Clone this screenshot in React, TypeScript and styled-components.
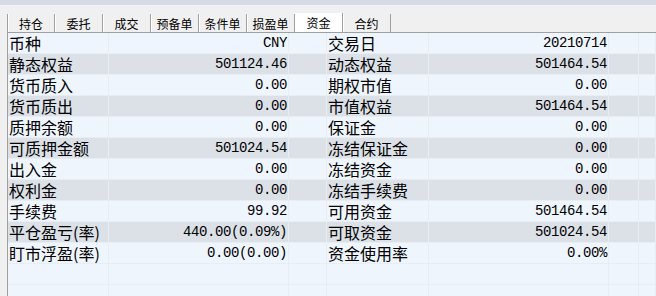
import React from "react";
import styled, { createGlobalStyle } from "styled-components";

const GlobalStyle = createGlobalStyle`
  html, body { margin: 0; padding: 0; background: #f0f0f0; }
  body { font-family: "Noto Sans CJK SC", "Liberation Sans", sans-serif; }
`;

const tabs = ["持仓", "委托", "成交", "预备单", "条件单", "损盈单", "资金", "合约"];
const activeTab = "资金";

const rows: [string, string, string, string][] = [
  ["币种", "CNY", "交易日", "20210714"],
  ["静态权益", "501124.46", "动态权益", "501464.54"],
  ["货币质入", "0.00", "期权市值", "0.00"],
  ["货币质出", "0.00", "市值权益", "501464.54"],
  ["质押余额", "0.00", "保证金", "0.00"],
  ["可质押金额", "501024.54", "冻结保证金", "0.00"],
  ["出入金", "0.00", "冻结资金", "0.00"],
  ["权利金", "0.00", "冻结手续费", "0.00"],
  ["手续费", "99.92", "可用资金", "501464.54"],
  ["平仓盈亏(率)", "440.00(0.09%)", "可取资金", "501024.54"],
  ["盯市浮盈(率)", "0.00(0.00)", "资金使用率", "0.00%"],
];

const COLS = "101px 180px 38px 102px 180px 30px 1fr";

const Screen = styled.div`
  width: 656px;
  height: 296px;
  overflow: hidden;
  background: #f0f0f0;
  display: flex;
  flex-direction: column;
`;

const TopBand = styled.div`
  height: 5px;
  background: #d7dbe8;
  flex: none;
`;

const TabBar = styled.div`
  height: 27px;
  flex: none;
  display: flex;
  align-items: flex-end;
  padding-left: 7px;
`;

const Tab = styled.div<{ $active?: boolean; $first?: boolean }>`
  box-sizing: border-box;
  width: 48px;
  height: ${(p) => (p.$active ? 19 : 18)}px;
  display: flex;
  align-items: center;
  justify-content: center;
  padding-top: ${(p) => (p.$active ? 1 : 2)}px;
  font-size: 12px;
  line-height: 14px;
  color: #000;
  background: ${(p) => (p.$active ? "#ffffff" : "transparent")};
  border-left: ${(p) => (p.$first ? "1px solid #a0a0a0" : "none")};
  border-right: 1px solid #a0a0a0;
  box-shadow: ${(p) => (p.$active ? "none" : "inset 1px 0 0 #ffffff")};
`;

const Panel = styled.div`
  flex: 1;
  margin-left: 7px;
  border-left: 1px solid #a0a0a0;
  border-top: 1px solid #a0a0a0;
  background: #eff5fd;
`;

const Row = styled.div<{ $shade?: boolean }>`
  display: grid;
  grid-template-columns: ${COLS};
  height: 21px;
  box-sizing: border-box;
  border-bottom: 1px solid #e8edf4;
  background: ${(p) => (p.$shade ? "#dce1e8" : "#eff5fd")};
`;

const Cell = styled.div<{ $num?: boolean }>`
  box-sizing: border-box;
  border-right: 1px solid #e8edf4;
  height: 20px;
  line-height: 20px;
  white-space: nowrap;
  color: #000;
  ${(p) =>
    p.$num
      ? `font-family: "Liberation Mono", monospace; font-size: 14px; letter-spacing: -0.4px; text-align: right; padding-right: 1px;`
      : `font-size: 16px; padding-left: 1px;`}
`;

export default function App() {
  return (
    <Screen>
      <GlobalStyle />
      <TopBand />
      <TabBar>
        {tabs.map((t, i) => (
          <Tab key={t} $first={i === 0} $active={t === activeTab}>
            {t}
          </Tab>
        ))}
      </TabBar>
      <Panel>
        {rows.map((r, i) => (
          <Row key={r[0]} $shade={i % 2 === 1}>
            <Cell>{r[0]}</Cell>
            <Cell $num>{r[1]}</Cell>
            <Cell />
            <Cell>{r[2]}</Cell>
            <Cell $num>{r[3]}</Cell>
            <Cell />
            <Cell />
          </Row>
        ))}
        {[0, 1].map((k) => (
          <Row key={"empty" + k}>
            <Cell />
            <Cell />
            <Cell />
            <Cell />
            <Cell />
            <Cell />
            <Cell />
          </Row>
        ))}
      </Panel>
    </Screen>
  );
}
